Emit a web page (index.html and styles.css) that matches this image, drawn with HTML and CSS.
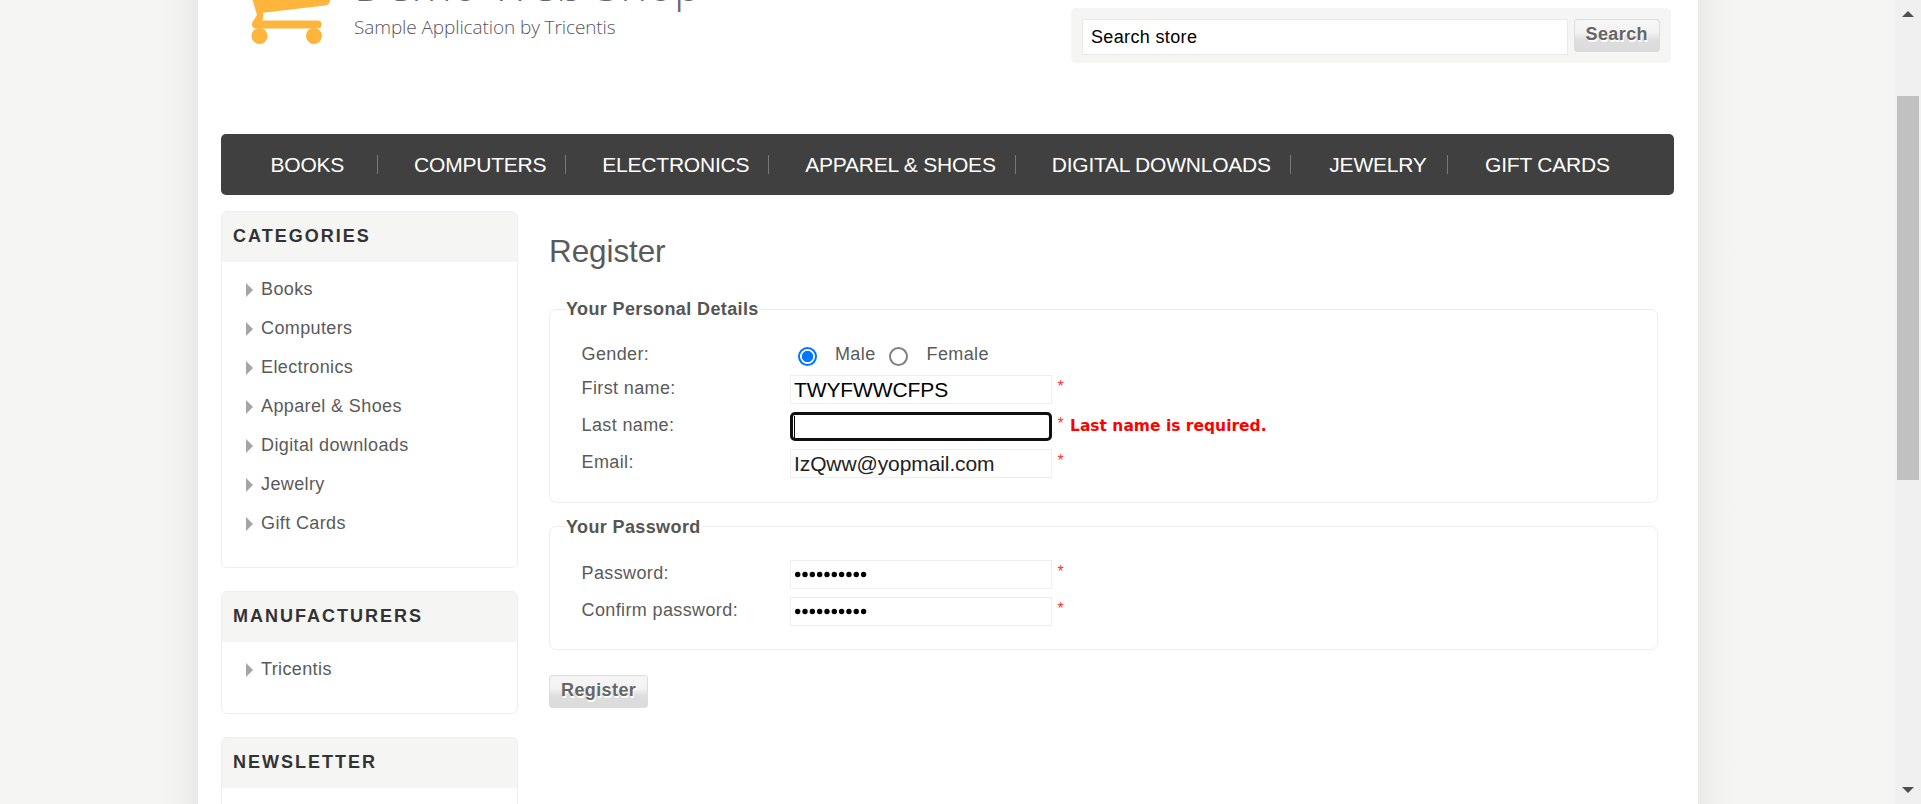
FILE: index.html
```
<!DOCTYPE html>
<html lang="en">
<head>
<meta charset="utf-8">
<title>Demo Web Shop. Register</title>
<link rel="stylesheet" href="styles.css">
</head>
<body>
<div class="page">
  <header class="header">
    <div class="logo">
      <svg class="cart" width="90" height="60" viewBox="0 0 90 60"><g fill="#ffb53b"><path d="M3.500 0H81V1.500Q80 5 76 5.500L14 12.700Q15 17 13 21L8 25L3 23L8 15Z"/><rect x="3" y="20.500" width="69.500" height="8" rx="4"/><circle cx="10.500" cy="36" r="8"/><circle cx="65" cy="36" r="8"/></g></svg>
      <div class="brand"><div class="shop-name">Demo Web Shop</div><div class="tagline">Sample Application by Tricentis</div></div>
    </div>
    <form class="search-box"><input class="search-input" type="text" value="Search store"><button class="btn" type="button">Search</button></form>
  </header>
  <nav class="menu">
    <a class="first">BOOKS</a><i></i><a>COMPUTERS</a><i></i><a>ELECTRONICS</a><i></i><a>APPAREL &amp; SHOES</a><i></i><a>DIGITAL DOWNLOADS</a><i class="wide"></i><a>JEWELRY</a><i class="last"></i><a>GIFT CARDS</a>
  </nav>
  <div class="columns">
    <aside class="side">
      <section class="block"><h3>CATEGORIES</h3><ul><li>Books</li><li>Computers</li><li>Electronics</li><li>Apparel &amp; Shoes</li><li>Digital downloads</li><li>Jewelry</li><li>Gift Cards</li></ul></section>
      <section class="block"><h3>MANUFACTURERS</h3><ul><li>Tricentis</li></ul></section>
      <section class="block newsletter"><h3>NEWSLETTER</h3></section>
    </aside>
    <main class="main">
      <h1>Register</h1>
      <section class="group">
        <h2>Your Personal Details</h2>
        <div class="row gender"><label>Gender:</label><span class="radio on"></span><span class="male">Male</span><span class="radio"></span><span class="female">Female</span></div>
        <div class="row"><label>First name:</label><input class="field" type="text" value="TWYFWWCFPS"><span class="star">*</span></div>
        <div class="row"><label>Last name:</label><div class="field focused"><span class="caret"></span></div><span class="star">*</span><span class="error">Last name is required.</span></div>
        <div class="row"><label>Email:</label><input class="field email" type="text" value="IzQww@yopmail.com"><span class="star">*</span></div>
      </section>
      <section class="group password">
        <h2>Your Password</h2>
        <div class="row"><label>Password:</label><div class="field dots"><svg width="76" height="8"><path d="M3.700 3.500H75" /></svg></div><span class="star">*</span></div>
        <div class="row"><label>Confirm password:</label><div class="field dots"><svg width="76" height="8"><path d="M3.700 3.500H75" /></svg></div><span class="star">*</span></div>
      </section>
      <button class="btn register" type="button">Register</button>
    </main>
  </div>
</div>
<div class="scrollbar"><svg width="12" height="6"><path d="M0 6L6 0L12 6Z"/></svg><div class="thumb"></div><svg class="down" width="12" height="6"><path d="M0 0H12L6 6Z"/></svg></div>
</body>
</html>
```
FILE: styles.css
```
* { box-sizing: border-box; }
html, body { height: 804px; overflow: hidden; }
body { margin: 0; display: flex; background: linear-gradient(90deg, #f5f5f3 156px, #f1f1ef 180px, #e9e9e7 198px, #e9e9e7 1698px, #f1f1ef 1715px, #f5f5f3 1740px); color: #5a5a5a; font-family: "Liberation Sans", Arial, sans-serif; font-size: 18px; letter-spacing: .38px; }
h1, h2, h3, ul { margin: 0; padding: 0; }
input { font-family: inherit; outline: none; }
.page { flex: none; width: 1500px; height: 804px; margin-left: 198px; padding: 0 24px 0 23px; background: #fff; overflow: hidden; }
.header { height: 134px; display: flex; justify-content: space-between; }
.logo { display: flex; padding-left: 28px; }
.cart { flex: none; }
.brand { padding-left: 15px; }
.shop-name { height: 14px; display: flex; align-items: flex-end; margin: -6px 0 6px; font: 300 45.700px/49px "Open Sans", sans-serif; letter-spacing: 0; color: #666671; white-space: nowrap; }
.tagline { font: 300 19px/27px "Open Sans", sans-serif; letter-spacing: -.1px; color: #555560; white-space: nowrap; }
.search-box { width: 600px; height: 55px; margin: 8px 3px 0 0; padding: 11px; display: flex; gap: 6px; align-items: flex-start; background: #f5f5f3; border-radius: 5px; }
.search-input { width: 486px; height: 36px; border: 1px solid #e9e9e6; padding: 0 8px; font-size: 18px; letter-spacing: .35px; color: #000; }
.btn { height: 33px; padding: 0 11px 3px; border: 1px solid #ddd; border-radius: 3px; background: linear-gradient(#f6f6f6 0, #f3f3f3 40%, #ddd 65%, #dcdcdc 100%); color: #666; font: bold 18px/26px "Liberation Sans", Arial, sans-serif; letter-spacing: .4px; text-shadow: 1px 2px 0 #fff; }
.menu { height: 61px; display: flex; align-items: center; padding-left: 49.500px; background: #404040; border-radius: 5px; color: #fff; font-size: 21px; letter-spacing: -.22px; white-space: nowrap; }
.menu a { flex: none; padding-top: 1px; }
.menu .first { margin-right: 14px; }
.menu i { flex: none; width: 1px; height: 19px; margin: 0 36px 0 19px; background: #777; }
.menu .wide { margin-right: 38.500px; }
.menu .last { margin: 0 37px 0 20.500px; }
.columns { display: flex; padding-top: 16px; }
.side { width: 297px; flex: none; }
.block { margin-bottom: 23px; padding-bottom: 24px; border: 1px solid #eee; border-radius: 6px; overflow: hidden; }
.newsletter { height: 200px; }
.block h3 { height: 50px; padding-left: 11px; background: #f5f5f3; color: #333; font-size: 18px; line-height: 49px; letter-spacing: 2px; }
.block ul { padding-top: 8px; list-style: none; }
.block li { height: 39px; padding-left: 24px; display: flex; align-items: center; gap: 8px; }
.block li::before { content: ""; width: 7px; height: 14px; background: #a5a5a5; clip-path: polygon(0 0, 100% 50%, 0 100%); margin-top: 1px; }
.main { padding-left: 31px; width: 1140px; }
h1 { height: 60px; padding-top: 21px; font-size: 31.500px; line-height: 38px; font-weight: normal; letter-spacing: -.1px; }
.group { width: 1109px; height: 194px; margin-top: 38px; padding: 30px 31px; border: 1px solid #eee; border-radius: 7px; }
.group.password { height: 124px; margin-top: 23px; padding-top: 32px; }
.group h2 { width: max-content; height: 20px; margin: -41px 0 21px -15px; background: #fff; color: #555; font-size: 18px; line-height: 21px; }
.password h2 { margin: -42px 0 23px -15px; }
.row { height: 37px; display: flex; }
.gender { height: 35px; }
.row label { width: 209px; padding-left: .5px; flex: none; line-height: 27px; }
.gender label { line-height: 28px; }
.field { width: 262px; height: 29px; border: 1px solid #eee; padding: 1px 3px 0; font-size: 21px; color: #000; background: #fff; letter-spacing: -.1px; }
.email { color: #222; }
.focused { border: 3px solid #101010; border-radius: 5px; padding: 1px; }
.caret { display: block; width: 1px; height: 22px; background: #000; }
.star { width: 12px; padding: 0 0 0 5.500px; color: #f33; font: 16px/23px "Liberation Sans", Arial, sans-serif; }
.error { padding-left: 6px; color: #f00; font: bold 15.500px/28px "DejaVu Sans", Verdana, sans-serif; letter-spacing: 0; white-space: nowrap; }
.radio { width: 19px; height: 19px; margin: 7px 0 0 7.500px; border: 2px solid #808080; border-radius: 50%; flex: none; }
.radio.on { border: 2px solid #0075ff; background: radial-gradient(circle, #0075ff 0 5.300px, #fff 6px); }
.male { padding-left: 18.500px; margin-right: 6px; line-height: 28px; }
.female { padding-left: 18.500px; line-height: 28px; }
.dots { display: flex; align-items: center; padding-top: 0; }
.dots path { stroke: #000; stroke-width: 5.400; stroke-linecap: round; stroke-dasharray: 0 7.320; }
.register { display: block; margin-top: 25px; }
.scrollbar { position: absolute; right: 0; top: 0; width: 26px; height: 804px; padding-top: 11px; background: #f0f0f0; display: flex; flex-direction: column; align-items: center; fill: #505050; }
.thumb { width: 22px; height: 384px; margin-top: 79px; background: #c1c1c1; }
.down { margin-top: auto; margin-bottom: 11px; }
```
